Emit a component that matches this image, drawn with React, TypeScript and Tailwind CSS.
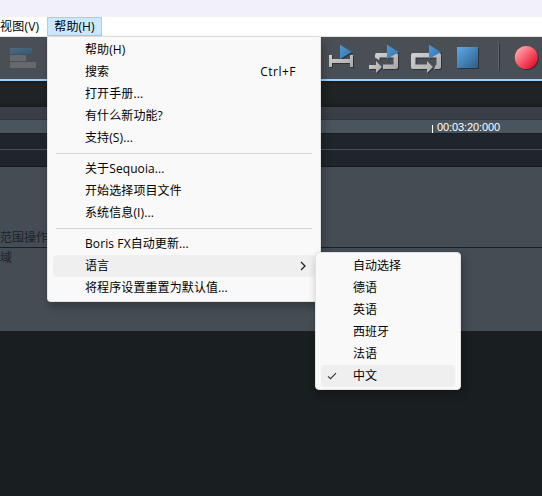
import { useState } from "react";

type MenuEntry = {
  label?: string;
  shortcut?: string;
  submenu?: boolean;
  separator?: boolean;
};

const helpMenu: MenuEntry[] = [
  { label: "帮助(H)" },
  { label: "搜索", shortcut: "Ctrl+F" },
  { label: "打开手册..." },
  { label: "有什么新功能?" },
  { label: "支持(S)..." },
  { separator: true },
  { label: "关于Sequoia..." },
  { label: "开始选择项目文件" },
  { label: "系统信息(I)..." },
  { separator: true },
  { label: "Boris FX自动更新..." },
  { label: "语言", submenu: true },
  { label: "将程序设置重置为默认值..." },
];

const languages = ["自动选择", "德语", "英语", "西班牙", "法语", "中文"];

const Gradients = () => (
  <defs>
    <linearGradient id="blue" x1="0" y1="0" x2="1" y2="1">
      <stop offset="0" stopColor="#5fa9e8" />
      <stop offset="1" stopColor="#2c5d88" />
    </linearGradient>
    <linearGradient id="play" x1="0" y1="0" x2="1" y2="1">
      <stop offset="0" stopColor="#4f9ad8" />
      <stop offset="1" stopColor="#3370a6" />
    </linearGradient>
    <linearGradient id="silver" x1="0" y1="0" x2="1" y2="1">
      <stop offset="0" stopColor="#d2d2d2" />
      <stop offset="1" stopColor="#a6a6a6" />
    </linearGradient>
    <linearGradient id="red" x1="0.1" y1="0.1" x2="0.9" y2="0.9">
      <stop offset="0" stopColor="#ffa9b0" />
      <stop offset="0.5" stopColor="#f8576a" />
      <stop offset="1" stopColor="#e00a28" />
    </linearGradient>
  </defs>
);

const TransportIcons = () => (
  <svg
    width="222"
    height="42"
    viewBox="320 37 222 42"
    className="shrink-0 drop-shadow-[1px_1px_0.5px_rgba(0,0,0,0.35)]"
  >
    <Gradients />
    {/* play in range */}
    <path d="M329 55h3v4h18v-4h3v12h-3v-4h-18v4h-3z" fill="url(#silver)" />
    <path d="M340 44.7l12 7.2-12 7.2z" fill="url(#play)" />
    {/* play into loop */}
    <path
      d="M375 55q0-2 2-2h19q2 0 2 2v12q0 2-2 2h-13v-4.5h10.5v-7h-14v3l-4.5-3z"
      fill="url(#silver)"
    />
    <path d="M369 65h7v-4l6 6-6 6v-4h-7z" fill="url(#silver)" />
    <path d="M387 44.7l12 7.2-12 7.2z" fill="url(#play)" />
    {/* loop */}
    <path
      d="M413 53h26q2 0 2 2v12q0 2-2 2h-5l2-4.5h.5v-7h-21v7h11.5v-3.5l6 6-6 6v-4h-14q-2 0-2-2v-12q0-2 2-2z"
      fill="url(#silver)"
    />
    <path d="M429 44.7l12 7.2-12 7.2z" fill="url(#play)" />
    {/* stop */}
    <rect x="457" y="47" width="21" height="21" fill="url(#blue)" />
    <path d="M498.5 42v28" stroke="#62666c" />
    {/* record */}
    <circle cx="526.3" cy="57.5" r="11.5" fill="url(#red)" />
  </svg>
);

const Toolbar = () => (
  <div className="flex h-[42px] justify-between bg-[#4a4e55]">
    <div className="flex flex-col gap-px pt-[11px] pl-[10px]">
      <div className="h-[6px] w-[22px] bg-linear-to-br from-[#4e6a80] to-[#345a76]" />
      <div className="h-[6px] w-4 bg-[#65686d]" />
      <div className="h-[6px] w-[26px] bg-[#65686d]" />
    </div>
    <TransportIcons />
  </div>
);

const Arranger = () => (
  <div className="text-[#1c232b]">
    <div className="h-[2px] bg-[#99d1ff]" />
    <div className="h-[26px] border-t-2 border-[#1b1e20] bg-linear-to-b from-[#1f2325] from-80% to-[#191b1c]" />
    <div className="h-[13px] border-b border-[#2f353b] bg-[#3a3e45]" />
    <div className="flex h-[14px] items-end border-b border-[#191e23] bg-[#4a545e] pl-[432px]">
      <div className="h-2 w-px bg-white" />
      <span className="pl-1 font-['Liberation_Sans',sans-serif] text-[11px] leading-[12px] tracking-[-0.1px] text-white">
        00:03:20:000
      </span>
    </div>
    <div className="h-4 border-b border-[#4c5156] bg-[#20242c]" />
    <div className="h-[17px] border-b border-[#15191d] bg-[#20242c]" />
    <div className="flex h-[81px] items-end border-b border-[#192027] bg-[#444c54]">
      <span className="leading-[19px]">范围操作</span>
    </div>
    <div className="h-[83px] bg-[#444c54] leading-[19px]">域</div>
  </div>
);

const HelpMenu = () => (
  <div className="absolute top-[37px] left-[47px] w-[274px] rounded-b-[4px] border border-t-0 border-[#e2e2e2] bg-[#f9f9f9] px-[5px] pt-[2px] pb-[2px] shadow-[2px_4px_8px_rgba(0,0,0,0.28)]">
    {helpMenu.map((item, i) =>
      item.separator ? (
        <div key={i} className="flex h-[9px] items-center px-[3px]">
          <div className="h-px w-full bg-[#d4d4d4]" />
        </div>
      ) : (
        <div
          key={i}
          className={`flex h-[22px] items-center justify-between rounded-[4px] pl-8 ${
            item.submenu ? "bg-[#efefef] pr-[9px]" : "pr-[19px]"
          }`}
        >
          <span className="tracking-[0.1px]">{item.label}</span>
          {item.shortcut && (
            <span className="tracking-[0.5px]">{item.shortcut}</span>
          )}
          {item.submenu && (
            <svg width="6" height="10" viewBox="0 0 6 10" fill="none">
              <path d="M1 1l4 4-4 4" stroke="#222" strokeWidth="1.3" />
            </svg>
          )}
        </div>
      )
    )}
  </div>
);

const LanguageMenu = () => {
  const [current, setCurrent] = useState("中文");

  return (
    <div className="absolute top-[252px] left-[315px] w-[146px] rounded-[4px] border border-[#e2e2e2] bg-[#f9f9f9] px-[5px] py-[2px] shadow-[2px_4px_8px_rgba(0,0,0,0.28)]">
      {languages.map((name) => (
        <div
          key={name}
          onClick={() => setCurrent(name)}
          className={`flex h-[22px] items-center rounded-[4px] pl-[6px] ${
            name === current ? "bg-[#efefef]" : ""
          }`}
        >
          <div className="w-[26px]">
            {name === current && (
              <svg width="10" height="8" viewBox="0 0 10 8" fill="none">
                <path d="M1 4.3l2.6 2.4L9 1.2" stroke="#333" strokeWidth="1.1" />
              </svg>
            )}
          </div>
          <span>{name}</span>
        </div>
      ))}
    </div>
  );
};

const App = () => {
  return (
    <div className="relative h-[496px] w-[542px] overflow-hidden bg-[#191e21] font-['Open_Sans','Noto_Sans_CJK_SC',sans-serif] text-[12px] whitespace-nowrap text-black">
      <div className="h-[17px] bg-[#f2f0f8]" />
      <div className="flex h-5 border-b border-[#e5e5e5] bg-white">
        <div className="w-[47px] leading-[19px] tracking-[0.2px]">视图(V)</div>
        <div className="h-[19px] w-[55px] border border-[#99d1ff] bg-[#cce8ff] text-center leading-[17px] tracking-[0.1px]">
          帮助(H)
        </div>
      </div>
      <Toolbar />
      <Arranger />
      <HelpMenu />
      <LanguageMenu />
    </div>
  );
};

export default App;
